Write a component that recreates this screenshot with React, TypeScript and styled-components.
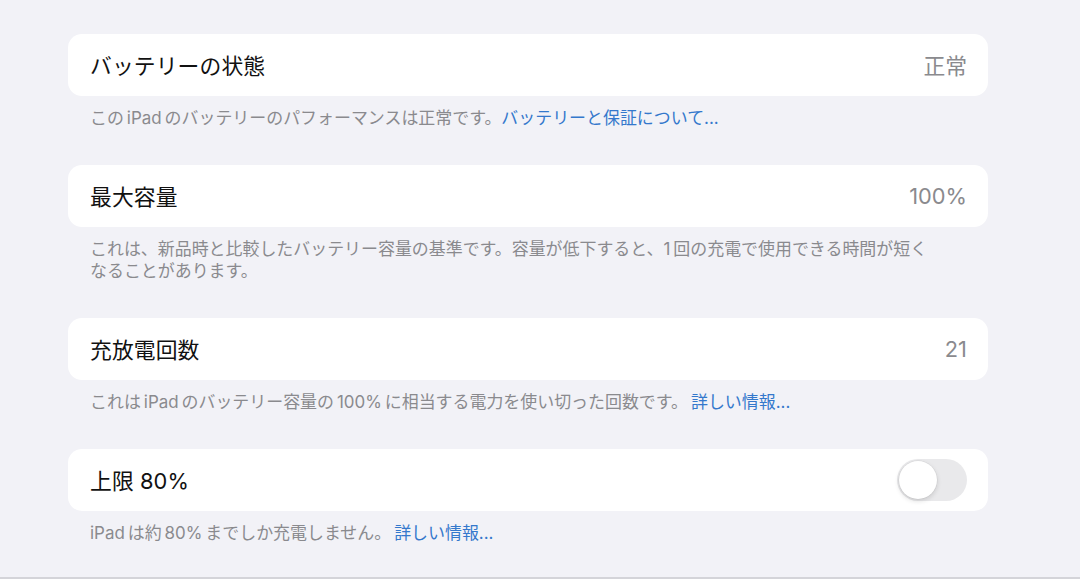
import React from "react";
import styled, { createGlobalStyle } from "styled-components";

const GlobalStyle = createGlobalStyle`
  html, body {
    margin: 0;
    padding: 0;
    background: #f2f2f7;
  }
  body {
    font-family: "Inter", "Noto Sans CJK JP", sans-serif;
    -webkit-font-smoothing: antialiased;
  }
`;

const Page = styled.div`
  box-sizing: border-box;
  height: 579px;
  background: #f2f2f7;
  border-bottom: 2px solid #d4d4d9;
  overflow: hidden;
`;

const Column = styled.div`
  width: 920px;
  margin-left: 68px;
  padding-top: 34px;
  display: flex;
  flex-direction: column;
  gap: 36px;
`;

const Section = styled.section`
  display: flex;
  flex-direction: column;
`;

const Card = styled.div`
  box-sizing: border-box;
  height: 62px;
  background: #ffffff;
  border-radius: 14px;
  display: flex;
  align-items: center;
  justify-content: space-between;
  padding: 0 21px 0 22px;
`;

const Title = styled.span`
  font-family: "Inter", "Noto Sans CJK JP", sans-serif;
  font-size: 21.8px;
  color: #111111;
  letter-spacing: 0.1px;
  margin-top: -1px;
`;

const Value = styled.span`
  font-family: "Inter", "Noto Sans CJK JP", sans-serif;
  font-size: 21.8px;
  color: #8a8a8e;
  margin-top: -1px;
`;

const Footer = styled.p`
  margin: 0;
  padding: 11px 22px 0;
  font-family: "Inter", "Noto Sans CJK JP", sans-serif;
  font-size: 16.95px;
  line-height: 22px;
  word-spacing: -1.8px;
  color: #8a8a8e;
`;

const Link = styled.a`
  color: #3478cc;
  text-decoration: none;
`;

const Track = styled.div<{ $on: boolean }>`
  box-sizing: border-box;
  width: 70px;
  height: 42px;
  border-radius: 21px;
  padding: 2px;
  display: flex;
  justify-content: ${(p) => (p.$on ? "flex-end" : "flex-start")};
  align-items: center;
  background: ${(p) => (p.$on ? "#34c759" : "#e9e9eb")};
`;

const Knob = styled.div`
  width: 38px;
  height: 38px;
  border-radius: 50%;
  background: #ffffff;
  box-shadow: 0 2px 5px rgba(0, 0, 0, 0.14), 0 0 0 0.6px rgba(0, 0, 0, 0.06);
`;

const Toggle = ({ on }: { on: boolean }) => (
  <Track $on={on}>
    <Knob />
  </Track>
);

export default function App() {
  return (
    <>
      <GlobalStyle />
      <Page>
        <Column>
          <Section>
            <Card>
              <Title>バッテリーの状態</Title>
              <Value>正常</Value>
            </Card>
            <Footer>
              この iPad のバッテリーのパフォーマンスは正常です。
              <Link>バッテリーと保証について...</Link>
            </Footer>
          </Section>
          <Section>
            <Card>
              <Title>最大容量</Title>
              <Value>100%</Value>
            </Card>
            <Footer>
              これは、新品時と比較したバッテリー容量の基準です。容量が低下すると、1 回の充電で使用できる時間が短く
              <br />
              なることがあります。
            </Footer>
          </Section>
          <Section>
            <Card>
              <Title>充放電回数</Title>
              <Value>21</Value>
            </Card>
            <Footer>
              これは iPad のバッテリー容量の 100% に相当する電力を使い切った回数です。 <Link>詳しい情報...</Link>
            </Footer>
          </Section>
          <Section>
            <Card>
              <Title>上限 80%</Title>
              <Toggle on={false} />
            </Card>
            <Footer>
              iPad は約 80% までしか充電しません。 <Link>詳しい情報...</Link>
            </Footer>
          </Section>
        </Column>
      </Page>
    </>
  );
}
